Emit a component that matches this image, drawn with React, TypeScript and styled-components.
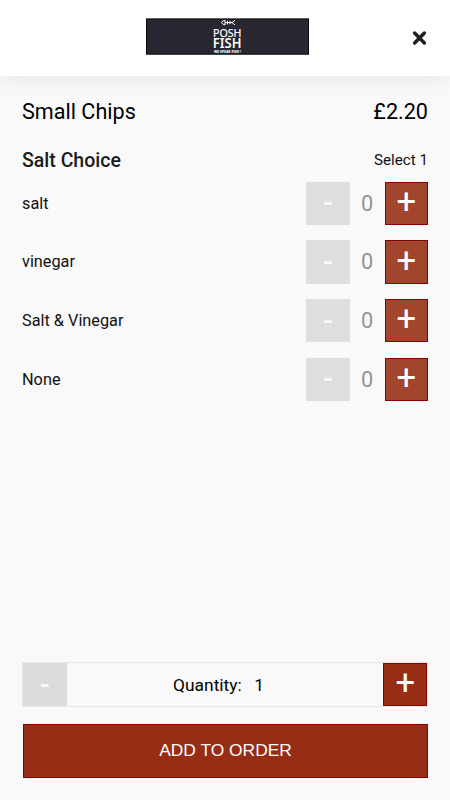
import React, { useState } from "react";
import styled, { createGlobalStyle, css } from "styled-components";

const GlobalStyle = createGlobalStyle`
  *, *::before, *::after { box-sizing: border-box; }
  body {
    margin: 0;
    background: #f9f9f9;
    color: #000;
    font-family: Roboto, "Liberation Sans", sans-serif;
  }
`;

const Screen = styled.div`
  display: flex;
  flex-direction: column;
  height: 100vh;
  min-height: 800px;
  background: #f9f9f9;
`;

const Header = styled.header`
  display: grid;
  grid-template-columns: 1fr auto 1fr;
  height: 76px;
  padding: 18px 22px 0 26px;
  background: #fff;
  box-shadow: 0 0 22px rgba(0, 0, 0, 0.1);
`;

const Logo = styled.svg`
  display: block;
  grid-column: 2;
  width: 163px;
  height: 37px;
`;

const CloseButton = styled.button`
  justify-self: end;
  align-self: start;
  margin-top: 12px;
  width: 16px;
  height: 16px;
  padding: 0;
  border: 0;
  background: none;

  svg {
    display: block;
  }
`;

const Content = styled.main`
  flex: 1;
  padding: 21px 22px 0;
`;

const TitleRow = styled.div`
  display: flex;
  justify-content: space-between;
  font-size: 21.6px;
  line-height: 29px;
`;

const GroupRow = styled.div`
  display: flex;
  justify-content: space-between;
  align-items: center;
  height: 26px;
  margin-top: 21px;
`;

const GroupName = styled.h2`
  margin: 0;
  font-size: 19.5px;
  font-weight: 500;
  color: #1b1b1b;
`;

const GroupHint = styled.span`
  font-size: 15.2px;
  color: #111;
`;

const OptionList = styled.div`
  display: flex;
  flex-direction: column;
  gap: 15.2px;
  margin-top: 8.5px;
`;

const OptionRow = styled.div`
  display: flex;
  justify-content: space-between;
  align-items: center;
  height: 43.5px;
  font-size: 16.3px;
  color: #111;
`;

const Stepper = styled.div`
  display: flex;
  align-items: center;
`;

const Count = styled.span`
  width: 35px;
  text-align: center;
  font-size: 21.75px;
  color: #949494;
`;

const StepButton = styled.button<{ $kind: "minus" | "plus"; $soft?: boolean }>`
  display: flex;
  align-items: center;
  justify-content: center;
  width: 43.5px;
  height: 43.5px;
  font-family: Roboto, sans-serif;
  line-height: 1;
  ${({ $kind, $soft }) =>
    $kind === "plus"
      ? css`
          padding: 0 0 4px;
          font-size: 34.5px;
          font-weight: 400;
          color: #fff;
          border: 1px solid #8b0000;
          background: ${$soft ? "#a1452c" : "#962d14"};
        `
      : css`
          padding: 0;
          font-size: 30px;
          font-weight: 500;
          color: #f8f8f8;
          border: 0;
          background: ${$soft ? "#dfdfdf" : "#dcdcdc"};
        `}
`;

const Footer = styled.footer`
  padding: 0 22px 22px;
`;

const QuantityBar = styled.div`
  display: flex;
  align-items: center;
  justify-content: space-between;
  height: 45px;
  border: 1px solid #e6e6e6;
  font-size: 17.4px;
`;

const QuantityText = styled.span`
  display: flex;
  gap: 12.5px;
  margin-right: 13px;
`;

const SubmitButton = styled.button`
  display: block;
  width: 405px;
  height: 54px;
  margin: 17px 0 0 1px;
  padding: 0 0 2px;
  border: 1px solid #8b0000;
  background: #962d14;
  color: #fff;
  font-family: "Liberation Sans", Arial, sans-serif;
  font-size: 17.4px;
`;

const options = ["salt", "vinegar", "Salt & Vinegar", "None"];

function BrandLogo() {
  return (
    <Logo viewBox="0 0 163 37" role="img" aria-label="Posh Fish">
      <rect x="0.5" y="0.9" width="162" height="35.3" fill="#282731" stroke="#08080c" />
      <g fill="none" stroke="#fff" strokeWidth="1">
        <path d="M79 2.3Q76.4 2.6 75.4 4.6Q76.4 6.4 79 6.9ZM79 4.6H86M81.5 2.8V6.4M84 3V6.2M89 2.3L86 4.6L89 6.9" />
      </g>
      <g fill="#fff" fontFamily="Noto Sans, sans-serif">
        <text x="67" y="19.2" fontSize="11.6" stroke="#fff" strokeWidth="0.2" textLength="28.4" lengthAdjust="spacingAndGlyphs">POSH</text>
        <text x="66.8" y="30.2" fontSize="13.4" fontWeight="600" textLength="28.6" lengthAdjust="spacingAndGlyphs">FISH</text>
        <text x="68" y="35.2" fontSize="4.2" fontWeight="800" textLength="27" lengthAdjust="spacingAndGlyphs">WE SPEAK FISH !</text>
      </g>
    </Logo>
  );
}

function Option({ name }: { name: string }) {
  const [count, setCount] = useState(0);
  return (
    <OptionRow>
      <span>{name}</span>
      <Stepper>
        <StepButton $kind="minus" $soft onClick={() => setCount(Math.max(0, count - 1))}>-</StepButton>
        <Count>{count}</Count>
        <StepButton $kind="plus" $soft onClick={() => setCount(count + 1)}>+</StepButton>
      </Stepper>
    </OptionRow>
  );
}

export default function App() {
  const [quantity, setQuantity] = useState(1);
  return (
    <>
      <GlobalStyle />
      <Screen>
        <Header>
          <BrandLogo />
          <CloseButton aria-label="Close">
            <svg width="16" height="16" viewBox="0 0 16 16">
              <path d="M2.6 3L12.4 13M12.4 3L2.6 13" stroke="#1f2020" strokeWidth="3.5" strokeLinecap="round" />
            </svg>
          </CloseButton>
        </Header>
        <Content>
          <TitleRow>
            <span>Small Chips</span>
            <span>£2.20</span>
          </TitleRow>
          <GroupRow>
            <GroupName>Salt Choice</GroupName>
            <GroupHint>Select 1</GroupHint>
          </GroupRow>
          <OptionList>
            {options.map((name) => (
              <Option key={name} name={name} />
            ))}
          </OptionList>
        </Content>
        <Footer>
          <QuantityBar>
            <StepButton $kind="minus" onClick={() => setQuantity(Math.max(1, quantity - 1))}>-</StepButton>
            <QuantityText>
              <span>Quantity:</span>
              <span>{quantity}</span>
            </QuantityText>
            <StepButton $kind="plus" onClick={() => setQuantity(quantity + 1)}>+</StepButton>
          </QuantityBar>
          <SubmitButton>ADD TO ORDER</SubmitButton>
        </Footer>
      </Screen>
    </>
  );
}
